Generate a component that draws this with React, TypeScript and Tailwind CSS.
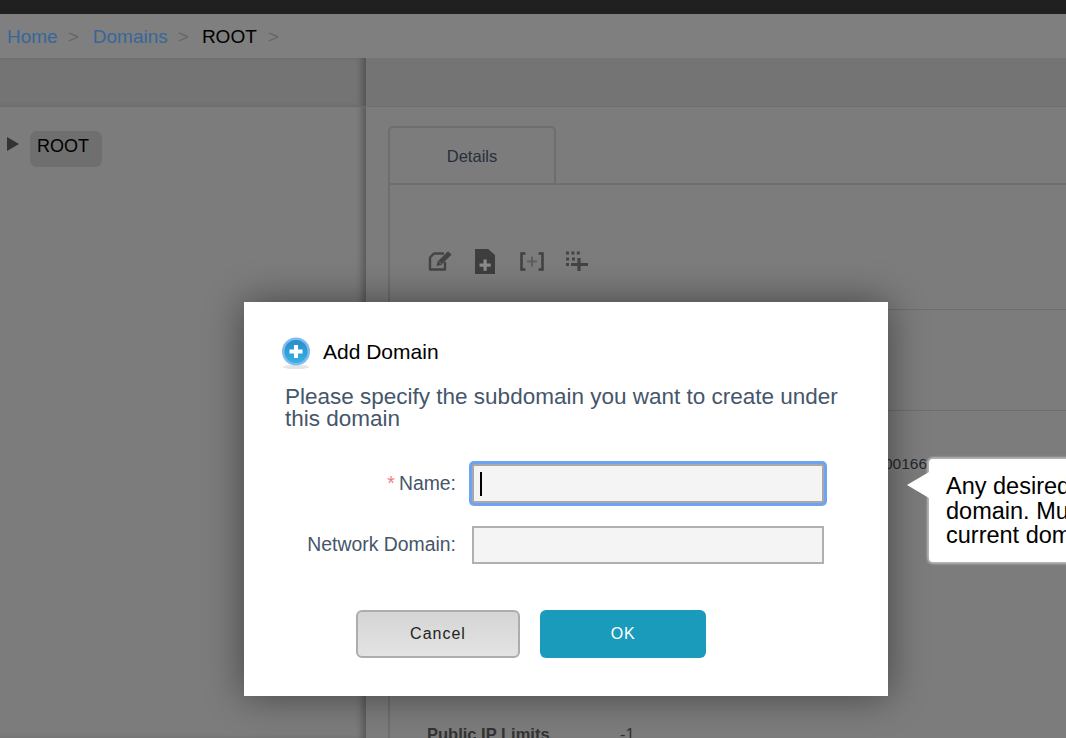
import { useEffect, useRef } from "react";

const SANS = "font-['Liberation_Sans',Arial,sans-serif]";

function EditIcon() {
  return (
    <svg width="26" height="24" viewBox="0 0 26 24" fill="none">
      <path d="M16 4.5H6L2 8.5V20.5H17V13" stroke="#444444" strokeWidth="2.4" strokeLinejoin="round" />
      <path d="M8.5 17l1.2-4.6L20 2.2l3.6 3.4L13.2 16z" fill="#444444" />
      <path d="M11.2 12.8l2 2" stroke="#7a7a7a" strokeWidth="1" />
    </svg>
  );
}

function NewDocIcon() {
  return (
    <svg width="20" height="25" viewBox="0 0 20 25">
      <path d="M0 0h13l7 6v19H0z" fill="#3e3e3e" />
      <path d="M8.5 10.5h3.2v4h4v3.2h-4v4H8.5v-4h-4v-3.2h4z" fill="#8c8c8c" />
    </svg>
  );
}

function BracketPlusIcon() {
  return (
    <svg width="24" height="19" viewBox="0 0 24 19" fill="none">
      <path d="M5.5 1.5H1.5v16h4M18.5 1.5h4v16h-4" stroke="#424242" strokeWidth="2.6" />
      <path d="M12 4.5v10M7 9.5h10" stroke="#5e5e5e" strokeWidth="2" />
    </svg>
  );
}

function GridPlusIcon() {
  return (
    <svg width="22" height="20" viewBox="0 0 22 20" fill="none">
      <path d="M0 2h15M0 8h3M0 13.5h3M6 8h3" stroke="#444444" strokeWidth="3" strokeDasharray="3 2.4" />
      <path d="M13 7v13M5 13.5h17" stroke="#444444" strokeWidth="3.2" />
    </svg>
  );
}

function AddIcon() {
  return (
    <svg width="30" height="33" viewBox="0 0 30 33">
      <defs>
        <linearGradient id="addFill" x1="0" y1="0" x2="0" y2="1">
          <stop offset="0" stopColor="#2a8cc8" />
          <stop offset="1" stopColor="#38b0e2" />
        </linearGradient>
      </defs>
      <ellipse cx="15" cy="30" rx="13" ry="2" fill="#e4e4e4" />
      <circle cx="15" cy="14.5" r="14" fill="#7dbcf0" />
      <circle cx="15" cy="14.5" r="11.5" fill="url(#addFill)" />
      <path d="M13 8h4v4.5h4.5v4H17V21h-4v-4.500H8.500v-4H13z" fill="#ffffff" />
    </svg>
  );
}

export default function App() {
  const nameRef = useRef<HTMLInputElement>(null);

  useEffect(() => {
    nameRef.current?.focus();
  }, []);

  return (
    <div className={`relative h-[738px] w-[1066px] overflow-hidden bg-[#7c7c7c] ${SANS}`}>
      <div className="h-[14px] bg-[#202020]" />

      <div className="flex h-[44px] items-center bg-[#7f7f7f] pl-[7px] pt-[3px] text-[19px]">
        <span className="text-[#36679a]">Home</span>
        <span className="ml-[10px] text-[#666666]">&gt;</span>
        <span className="ml-[14px] text-[#36679a]">Domains</span>
        <span className="ml-[10px] text-[#666666]">&gt;</span>
        <span className="ml-[13px] text-black">ROOT</span>
        <span className="ml-[11px] text-[#666666]">&gt;</span>
      </div>

      <div className="flex">
        <div className="h-[680px] w-[366px] shrink-0 shadow-[inset_-7px_0_6px_-3px_rgba(0,0,0,0.28)]">
          <div className="h-[49px] border-b border-[#6c6c6c] bg-[#747474] shadow-[inset_-7px_0_6px_-3px_rgba(0,0,0,0.28)]" />
          <div className="flex pl-[7px] pt-[24px]">
            <svg width="12" height="14" viewBox="0 0 12 14" className="mt-[6px]">
              <path d="M0 0l12 7-12 7z" fill="#333333" />
            </svg>
            <div className="ml-[11px] h-[36px] w-[72px] rounded-[7px] bg-[#6f6f6f] pl-[7px] pt-[3px] text-[18px] leading-[24px] text-black">
              ROOT
            </div>
          </div>
        </div>

        <div className="h-[680px] flex-1">
          <div className="h-[49px] border-b border-[#6e6e6e] bg-[#747474]" />

          <div className="pl-[22px] pt-[19px]">
            <div className="relative z-10 flex h-[59px] w-[168px] items-center justify-center rounded-t-[5px] border-2 border-[#6e6e6e] pt-[2px] text-[16.5px] text-[#25303c]">
              Details
            </div>
            <div className="-mt-[2px] h-[600px] border-l-2 border-t-2 border-[#6e6e6e]">
              <div className="flex h-[125px] items-center border-b border-[#6e6e6e] pl-[38px] pt-[28px]">
                <EditIcon />
                <div className="ml-[21px]">
                  <NewDocIcon />
                </div>
                <div className="ml-[25px]">
                  <BracketPlusIcon />
                </div>
                <div className="ml-[22px]">
                  <GridPlusIcon />
                </div>
              </div>
              <div className="h-[101px] border-b border-[#6e6e6e]" />
              <div className="pl-[494px] pt-[44px] text-[15.5px] leading-[18px] text-[#25282c]">00166</div>
              <div className="mt-[252px] flex pl-[37px] text-[16.500px] font-bold leading-[18px] text-[#333333]">
                <span className="w-[193px]">Public IP Limits</span>
                <span className="font-normal">-1</span>
              </div>
            </div>
          </div>
        </div>
      </div>

      {/* dialog */}
      <div className="absolute left-[244px] top-[302px] h-[394px] w-[644px] bg-white shadow-[0_0_36px_rgba(0,0,0,0.45)]">
        <div className="flex items-center pl-[37px] pt-[34px]">
          <AddIcon />
          <span className="ml-[12px] pb-[2px] text-[21px] leading-[32px] text-black">Add Domain</span>
        </div>
        <p className="ml-[41px] mt-[16px] w-[560px] text-[22.500px] leading-[22px] text-[#45566a]">
          Please specify the subdomain you want to create under this domain
        </p>

        <div className="mt-[34px] flex items-center">
          <label className="w-[212px] text-right text-[19.400px] text-[#45566a]">
            <span className="mr-[4px] text-[#f08080]">*</span>Name:
          </label>
          <div className="relative ml-[16px]">
            <input
              ref={nameRef}
              className="block h-[39px] w-[352px] rounded-[2px] border-2 border-[#a8a8a8] bg-[#f4f4f4] text-[18px] caret-transparent shadow-[0_0_0_3px_#6ea3f2] outline-none"
            />
            {/* text cursor */}
            <div className="absolute left-[8px] top-[8px] h-[24px] w-[2px] bg-black" />
          </div>
        </div>
        <div className="mt-[23px] flex items-center">
          <label className="w-[212px] text-right text-[19.400px] text-[#45566a]">Network Domain:</label>
          <input className="ml-[16px] h-[38px] w-[352px] border-2 border-[#b0b0b0] bg-[#f4f4f4] outline-none" />
        </div>

        <div className="mt-[46px] flex pl-[112px]">
          <button className="h-[48px] w-[164px] rounded-[6px] border-2 border-[#adadad] bg-gradient-to-b from-[#d6d5d5] to-[#e3e3e3] text-[16px] tracking-[1px] text-[#222222]">
            Cancel
          </button>
          <button className="ml-[20px] h-[48px] w-[166px] rounded-[6px] bg-[#1a9bbc] text-[16px] tracking-[0.8px] text-white">
            OK
          </button>
        </div>
      </div>

      {/* tooltip */}
      <div className="absolute left-[929px] top-[459px] h-[103px] w-[200px] rounded-[4px] bg-white pl-[17px] pt-[15px] text-[23.500px] leading-[24.5px] text-black shadow-[0_0_2px_2px_rgba(190,190,190,0.9)]">
        <span className="block whitespace-nowrap">Any desired</span>
        <span className="block whitespace-nowrap">domain. Must</span>
        <span className="block whitespace-nowrap">current domain</span>
        <div className="absolute -left-[22px] top-[13px] h-0 w-0 border-y-[13px] border-r-[22px] border-y-transparent border-r-white" />
      </div>
    </div>
  );
}
